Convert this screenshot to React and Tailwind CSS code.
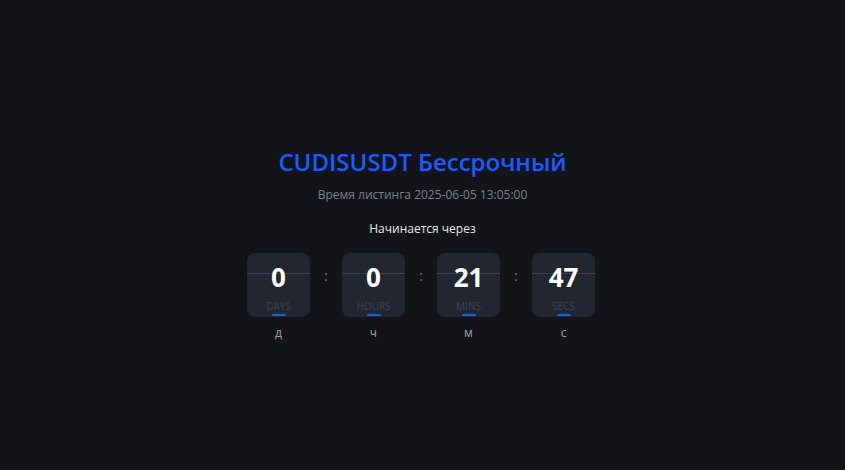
import React from 'react';

const units = [
  { value: '0', label: 'DAYS', short: 'д' },
  { value: '0', label: 'HOURS', short: 'ч' },
  { value: '21', label: 'MINS', short: 'м' },
  { value: '47', label: 'SECS', short: 'с' },
];

function TimeBox({ value, label, short }) {
  return (
    <div className="flex w-[63px] flex-col items-center">
      <div className="relative flex h-[64px] w-[63px] flex-col items-center rounded-[8px] bg-[#222630]">
        <div className="absolute left-0 right-0 top-[20px] h-px bg-[#3c414d]" />
        <span className="relative mt-[6px] text-[26px] font-bold leading-[36px] text-white">{value}</span>
        <span className="mt-[5px] text-[10px] leading-[12px] text-[#3d4352]">{label}</span>
        <div className="absolute bottom-[1px] h-[2px] w-[14px] rounded-full bg-[#1f5fe8]" />
      </div>
      <span className="mt-[8px] text-[12px] leading-[16px] text-[#9aa0ab]">{short}</span>
    </div>
  );
}

export default function App() {
  return (
    <div
      className="flex h-[470px] w-[845px] flex-col items-center bg-[#131419] pt-[146px]"
      style={{ fontFamily: '"Open Sans", "Noto Sans", sans-serif' }}
    >
      <h1 className="text-[24px] font-semibold leading-[32px] text-[#1a5cff]">CUDISUSDT Бессрочный</h1>
      <p className="mt-[8px] text-[12px] leading-[18px] text-[#7a808c]">Время листинга 2025-06-05 13:05:00</p>
      <p className="mt-[16px] text-[12px] leading-[18px] text-[#e8e9ec]">Начинается через</p>
      <div className="mr-[3px] mt-[15px] flex items-start">
        {units.map((u, i) => (
          <React.Fragment key={u.label}>
            {i > 0 && (
              <div className="flex h-[44px] w-[32px] items-center justify-center text-[14px] text-[#6b7180]">:</div>
            )}
            <TimeBox {...u} />
          </React.Fragment>
        ))}
      </div>
    </div>
  );
}
